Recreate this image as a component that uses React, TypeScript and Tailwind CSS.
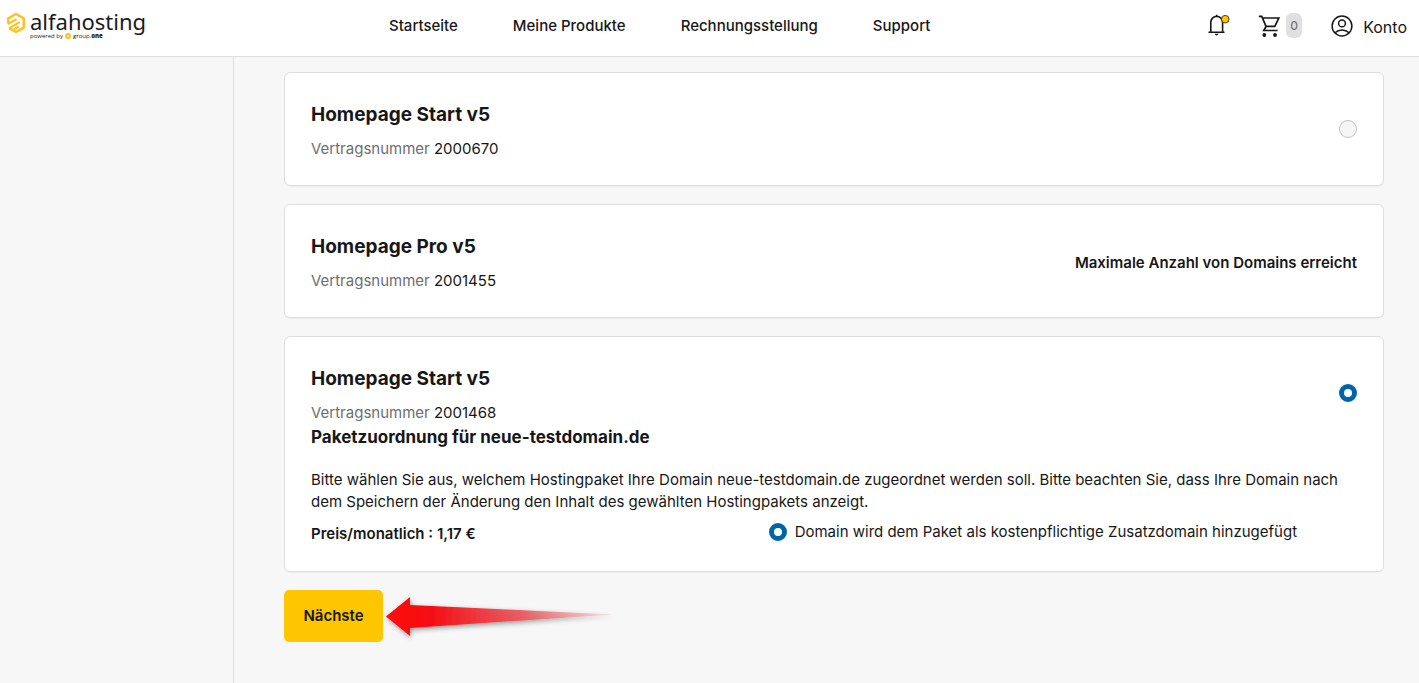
import React from "react";

const navItems = ["Startseite", "Meine Produkte", "Rechnungsstellung", "Support"];

const radioClass =
  "block h-[18px] w-[18px] shrink-0 appearance-none rounded-full border border-[#c4c4c4] bg-[#f6f6f6] checked:border-[5px] checked:border-[#0065a8] checked:bg-white";

function Logo() {
  return (
    <a href="#" aria-label="alfahosting" className="flex w-[389px] shrink-0 items-start gap-1 pl-[6px]">
      <svg viewBox="0 0 20 22" className="mt-3 h-[22px] w-5" fill="none" stroke="#fac31e" strokeWidth="2.5" strokeLinejoin="round">
        <path d="M2.2 11.500V6.400L10 2l7.800 4.400v9.200L10 20l-6.800-3.900" />
        <path d="M2 12l8.600-4.900M3.200 16.100l10.600-6M8 17.200l4.800-2.700" strokeWidth="2.200" />
      </svg>
      <span className="flex flex-col pt-[9px]">
        <span className="font-['Noto_Sans'] text-[22px] leading-6 text-[#1b1b1b]">alfahosting</span>
        <span className="flex items-center gap-[2px] font-['Open_Sans'] text-[6px] leading-[6px] font-medium text-[#222]">
          powered by
          <svg viewBox="0 0 6 6" className="h-[6px] w-[6px]">
            <circle cx="3" cy="3" r="3" fill="#fac31e" />
            <circle cx="3" cy="3" r="1" fill="#fff3c4" />
          </svg>
          <span>
            group.<b className="font-extrabold">one</b>
          </span>
        </span>
      </span>
    </a>
  );
}

function Header() {
  return (
    <header className="flex h-[57px] items-start border-b border-[#dedede] bg-white">
      <Logo />
      <nav className="flex gap-[55px] pt-[14px] text-[15px] leading-6 font-medium">
        {navItems.map((item) => (
          <a key={item} href="#" className="whitespace-nowrap">
            {item}
          </a>
        ))}
      </nav>
      <div className="ml-auto flex items-center pt-3 pr-3">
        <button type="button" aria-label="Benachrichtigungen" className="mr-7">
          <svg viewBox="0 0 24 24" className="h-6 w-6" fill="none" stroke="#171717" strokeWidth="1.600">
            <path d="M2.500 18.200h16M4.800 18V8.300a5.900 5.900 0 0 1 11.800 0V18M10.700 2.500V.8" />
            <path d="M8.800 19.800h3.800c-.3 1.100-1 1.700-1.900 1.700s-1.600-.6-1.900-1.700z" fill="#171717" stroke="none" />
            <circle cx="19.200" cy="5.200" r="3.800" fill="#fdc400" stroke="#4a3d0c" strokeWidth="1" />
          </svg>
        </button>
        <button type="button" aria-label="Warenkorb" className="mr-[29px] flex items-center gap-1">
          <svg viewBox="0 0 24 24" className="h-6 w-6" fill="none" stroke="#171717" strokeWidth="1.700">
            <path d="M.8 2.300h3l4.200 10h8.800L20.800 4H4.600M8 12.300l-2.200 4.200h13.800" />
            <circle cx="6.300" cy="21" r="1.900" fill="#171717" stroke="none" />
            <circle cx="17" cy="21" r="1.900" fill="#171717" stroke="none" />
          </svg>
          <span className="flex h-[25px] w-4 items-center justify-center rounded-[6px] bg-[#e0e0e0] text-xs font-medium text-[#777]">0</span>
        </button>
        <a href="#" className="flex items-center gap-[10px] text-[16px] leading-6">
          <svg viewBox="0 0 22 22" className="h-[22px] w-[22px]" fill="none" stroke="#171717" strokeWidth="1.500">
            <circle cx="11" cy="11" r="9.900" />
            <circle cx="11" cy="8.400" r="3.400" />
            <path d="M4 17.700c1.800-1.700 4.200-2.700 7-2.700s5.200 1 7 2.700" />
          </svg>
          <span className="pt-[3px]">Konto</span>
        </a>
      </div>
    </header>
  );
}

interface PackageProps {
  id: string;
  title: string;
  contract: string;
  selected?: boolean;
  notice?: string;
  children?: React.ReactNode;
}

function PackageCard({ id, title, contract, selected, notice, children }: PackageProps) {
  return (
    <section className="rounded-[6px] border border-[#dedede] bg-white px-[26px] pt-7 pb-6 shadow-[0_1px_1px_rgba(0,0,0,0.04)]">
      <div className="flex items-center justify-between">
        <div>
          <h2 className="text-[19px] leading-7 font-bold">{title}</h2>
          <p className="mt-2 text-[15px] leading-6">
            <span className="text-[#6e6e6e]">Vertragsnummer</span> {contract}
          </p>
        </div>
        {notice ? (
          <p className="text-[15px] leading-6 font-semibold">{notice}</p>
        ) : (
          <input type="radio" name="paket" id={id} aria-label={`${title} ${contract}`} defaultChecked={selected} className={`${radioClass} mb-1`} />
        )}
      </div>
      {children}
    </section>
  );
}

export default function App() {
  return (
    <div className="flex min-h-screen flex-col bg-[#f7f7f7] font-['Inter',sans-serif] text-[#171717]">
      <Header />
      <div className="flex grow">
        <aside className="w-[234px] shrink-0 border-r border-[#dedede]" />
        <main className="flex grow flex-col gap-[18px] pt-[15px] pr-[35px] pb-9 pl-[50px]">
          <PackageCard id="p1" title="Homepage Start v5" contract="2000670" />
          <PackageCard id="p2" title="Homepage Pro v5" contract="2001455" notice="Maximale Anzahl von Domains erreicht" />
          <PackageCard id="p3" title="Homepage Start v5" contract="2001468" selected>
            <h3 className="text-[17px] leading-6 font-bold">Paketzuordnung für neue-testdomain.de</h3>
            <p className="mt-5 text-[15px] leading-[22px]">
              Bitte wählen Sie aus, welchem Hostingpaket Ihre Domain neue-testdomain.de zugeordnet werden soll. Bitte beachten Sie, dass Ihre Domain nach dem Speichern der Änderung den Inhalt des gewählten Hostingpakets anzeigt.
            </p>
            <div className="mt-2 grid grid-cols-[7fr_9fr] items-start">
              <p className="text-[15px] leading-[26px] font-semibold">Preis/monatlich : 1,17 €</p>
              <label className="flex items-center gap-2 text-[15px] leading-[22px]">
                <input type="radio" name="zuordnung" defaultChecked className={radioClass} />
                Domain wird dem Paket als kostenpflichtige Zusatzdomain hinzugefügt
              </label>
            </div>
          </PackageCard>
          <div className="flex items-center gap-[3px]">
            <button type="button" className="h-[52px] min-w-[99px] rounded-[5px] bg-[#fec600] px-[18px] text-[15px] font-semibold">
              Nächste
            </button>
            <svg viewBox="0 0 230 52" className="h-[52px] w-[230px]" aria-hidden="true">
              <defs>
                <linearGradient id="arrowFade" x1="0" x2="1">
                  <stop offset="0" stopColor="#ff0808" />
                  <stop offset="0.2" stopColor="#f50f14" />
                  <stop offset="0.6" stopColor="#e8545a" stopOpacity="0.9" />
                  <stop offset="1" stopColor="#f0a0a0" stopOpacity="0.3" />
                </linearGradient>
                <filter id="arrowShadow" x="-5%" y="-20%" width="112%" height="150%">
                  <feDropShadow dx="1" dy="2" stdDeviation="2.500" floodColor="#000" floodOpacity="0.4" />
                </filter>
              </defs>
              <path d="M0 26.500L24 7v8L227 24.500L24 38v8z" fill="url(#arrowFade)" filter="url(#arrowShadow)" />
            </svg>
          </div>
        </main>
      </div>
    </div>
  );
}
